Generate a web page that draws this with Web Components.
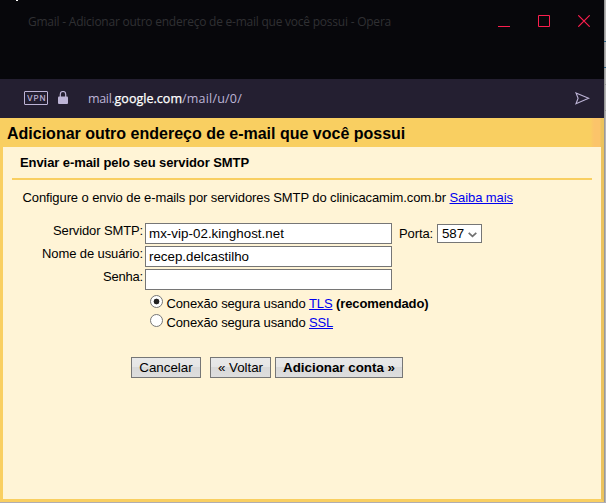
<!DOCTYPE html>
<html lang="pt-BR"><head><meta charset="utf-8"><title>Gmail</title>
<style>body{margin:0;overflow:hidden}</style></head><body>
<mail-popup></mail-popup>
<script>
const define=(name,html,init)=>customElements.define(name,class extends HTMLElement{
  connectedCallback(){
    if(this.shadowRoot)return;
    this.attachShadow({mode:'open'}).innerHTML=html;
    if(init)init(this,this.shadowRoot);
  }
});
/* One line of text tracked to a given advance width. */
define('tracked-text',`<style>:host{display:block;white-space:pre;line-height:15px;flex:none}span{display:inline-block}:host(.link) span{text-decoration:underline}</style><span><slot></slot></span>`,(el,root)=>{
  const w=+el.getAttribute('w'),s=root.querySelector('span');
  if(w)s.style.letterSpacing=((w-s.getBoundingClientRect().width)/el.textContent.length)+'px';
});
define('title-bar',`<style>
:host{display:flex;height:79px;background:#07070b;color:#303033;font:12px "Open Sans","Noto Sans",sans-serif;padding:0 12px 0 28px;box-sizing:border-box;position:relative}
tracked-text{margin-top:14px}svg{margin:15px 2px 0 auto;display:block;width:92px;height:12px}
i{position:absolute;left:16px;top:0;width:2px;height:1px;background:#fff}
</style><i></i><tracked-text w="363">Gmail - Adicionar outro endereço de e-mail que você possui - Opera</tracked-text>
<svg viewBox="0 0 92 12" fill="none" stroke="#fa1e4e"><path d="M0 11.5h12M40.5.5h11v11h-11z"/><path d="M80.3.3l11.4 11.4M91.7.3L80.3 11.7" stroke-width="1.15"/></svg>`);
define('address-bar',`<style>
:host{display:flex;height:39px;background:#241f31;color:#bdb4d6;font:12.5px "Open Sans","Noto Sans",sans-serif;box-sizing:border-box;padding:0 14px 0 24px}
.vpn{box-sizing:border-box;width:24px;height:14px;margin-top:12px;border:1px solid #bdb4d6;border-radius:1px;padding-left:2px;font:500 8px Inter,sans-serif}
.vpn tracked-text{line-height:12px}.lock{width:10px;height:13px;margin:12px 20px 0 10px}
.url{display:flex;margin-top:12px}b{font-weight:400;color:#fff;-webkit-text-stroke:.25px #fff}
.send{width:15px;height:13px;margin:13px 0 0 auto}
</style><div class="vpn"><tracked-text w="19.5">VPN</tracked-text></div>
<svg class="lock" viewBox="0 0 10 13"><path d="M2.3 6V3.2a2.7 2.7 0 0 1 5.4 0V6" fill="none" stroke="#bdb4d6" stroke-width="1.2"/><rect y="5.5" width="10" height="7.5" rx="1" fill="#bdb4d6"/></svg>
<div class="url"><tracked-text w="26.5">mail.</tracked-text><b><tracked-text w="67.5">google.com</tracked-text></b><tracked-text w="60">/mail/u/0/</tracked-text></div>
<svg class="send" viewBox="0 0 15 13" fill="none" stroke="#bdb4d6" stroke-width="1.1"><path d="M1 .9L13.7 6.3 1 11.8 3.1 6.3z"/></svg>`);
define('page-heading',`<style>:host{display:block;height:29px;box-sizing:border-box;padding:7px 0 0 7px;background:linear-gradient(90deg,#f9cf61 590px,#fbc46a 594px,#fbc46a 600px,#ecc35c 601px);font:bold 16px "Liberation Sans",sans-serif;color:#000}tracked-text{line-height:18px}</style><tracked-text w="398.5"><slot></slot></tracked-text>`,
(el,root)=>{root.querySelector('tracked-text').textContent=el.textContent});
define('text-field',`<style>:host{display:block;box-sizing:border-box;width:247px;height:21px;border:1px solid #767676;background:#fff;padding:2px 0 0 3px;font-size:13.333px}</style><slot></slot>`);
define('port-select',`<style>:host{display:flex;box-sizing:border-box;width:45px;height:19px;border:1px solid #767676;background:#fff;padding:1px 4px 0 4px;font-size:13.333px}svg{width:9px;height:6px;margin:6px 0 0 auto}</style><slot></slot><svg viewBox="0 0 9 6" fill="none" stroke="#707070" stroke-width="1.7"><path d="M.7.8L4.5 4.4 8.3.8"/></svg>`);
define('radio-option',`<style>:host{display:flex;height:19px}i{box-sizing:border-box;width:13px;height:13px;border:1px solid #767676;border-radius:50%;background:#fff;margin-right:3.5px;flex:none}:host([checked]) i{background:radial-gradient(circle,#222 2.6px,#fff 3.2px)}div{display:flex;margin-top:1px}</style><i></i><div><slot></slot></div>`);
define('push-button',`<style>:host{display:flex;box-sizing:border-box;height:21px;border:1px solid #767676;background:linear-gradient(#e9e9e9 0%,#e5e5e5 49%,#d9d9d9 50%,#dedede 100%);padding-top:2px;justify-content:center;font-size:13.333px}</style><slot></slot>`);
define('smtp-form',`<style>
:host{display:block;box-sizing:border-box;height:355px;background:#fff4d6;border:solid #f9cf61;border-width:0 3px 3px;border-right-color:#ecc35c;font:13px "Liberation Sans",sans-serif;color:#000}
h2{font:bold 13px "Liberation Sans",sans-serif;margin:0 9px;height:33px;box-sizing:border-box;padding:8px 0 0 8px;border-bottom:2px solid #f9cf61}
.line,.buttons{display:flex}.line{padding:10px 0 0 19.5px}.link{color:#00e}
.fields{display:grid;grid-template-columns:140px 247px auto;column-gap:2px;row-gap:2px;padding-top:18px;grid-template-rows:21px 21px 21px}
.label{justify-self:end}.port{display:flex;margin-left:5px;gap:4px}.port>tracked-text{margin-top:3px}.port port-select{margin-top:1px}
.radios{padding:5px 0 0 147px}.buttons{padding:24px 0 0 128px}.c{width:70px;margin-right:9px}.v{width:61px;margin-right:4px}.a{width:128px;font-weight:bold}
</style>
<h2><tracked-text w="229">Enviar e-mail pelo seu servidor SMTP</tracked-text></h2>
<div class="line"><tracked-text w="427">Configure o envio de e-mails por servidores SMTP do clinicacamim.com.br </tracked-text><tracked-text class="link" w="63.5">Saiba mais</tracked-text></div>
<div class="fields"><tracked-text class="label" w="90">Servidor SMTP:</tracked-text><text-field><tracked-text w="135">mx-vip-02.kinghost.net</tracked-text></text-field><div class="port"><tracked-text w="34">Porta:</tracked-text><port-select><tracked-text w="22">587</tracked-text></port-select></div>
<tracked-text class="label" w="101">Nome de usuário:</tracked-text><text-field><tracked-text w="100">recep.delcastilho</tracked-text></text-field><span></span>
<tracked-text class="label" w="40">Senha:</tracked-text><text-field></text-field></div>
<div class="radios"><radio-option checked><tracked-text w="142.5">Conexão segura usando </tracked-text><tracked-text class="link" w="23.5">TLS</tracked-text><tracked-text w="96" style="font-weight:bold"> (recomendado)</tracked-text></radio-option>
<radio-option><tracked-text w="142.5">Conexão segura usando </tracked-text><tracked-text class="link" w="24">SSL</tracked-text></radio-option></div>
<div class="buttons"><push-button class="c"><tracked-text w="53.5">Cancelar</tracked-text></push-button><push-button class="v"><tracked-text w="45">« Voltar</tracked-text></push-button><push-button class="a"><tracked-text w="112">Adicionar conta »</tracked-text></push-button></div>`);
define('mail-popup',`<style>
:host{display:grid;grid-template-columns:604px 2px;grid-template-rows:502px 1px;width:606px;height:503px;background:#b0adb3}
.edge{background:linear-gradient(#2d6484,#2d6484) 0 41px/2px 1px no-repeat,linear-gradient(#2d6484,#2d6484) 0 67px/2px 1px no-repeat,linear-gradient(#999,#999) 0 84px/2px 1px no-repeat,linear-gradient(#999,#999) 0 110px/2px 1px no-repeat,linear-gradient(90deg,#999 1px,#b5b5b5 1px)}
</style><main><title-bar></title-bar><address-bar></address-bar><page-heading>Adicionar outro endereço de e-mail que você possui</page-heading><smtp-form></smtp-form></main><div class="edge"></div>`);
</script></body></html>
